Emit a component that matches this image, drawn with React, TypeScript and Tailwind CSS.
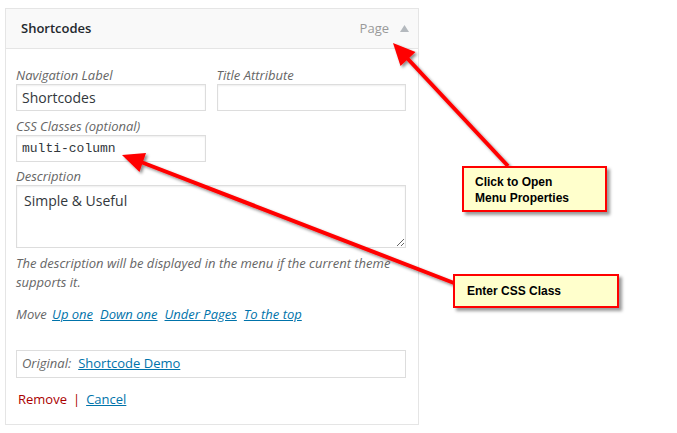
import React from 'react';

const labelCls = "block text-[13px] leading-[18px] italic text-[#666]";
const inputCls =
  "block w-full h-[27px] border border-[#ddd] bg-white px-[5px] text-[14px] text-[#32373c] shadow-[inset_0_1px_2px_rgba(0,0,0,0.07)] outline-none";

const MenuItemPanel: React.FC = () => {
  return (
    <div className="ml-[5px] mt-[8px] w-[414px] border border-[#e5e5e5] bg-white font-['Open_Sans',sans-serif]">
      {/* header */}
      <div className="flex h-[40px] items-center justify-between border-b border-[#e5e5e5] bg-[#f9f9f9] pl-[15px] pr-[9px]">
        <span className="text-[13px] font-semibold text-[#23282d]">Shortcodes</span>
        <span className="flex items-center gap-[11px] text-[13px] text-[#999]">
          Page
          <svg width="9" height="7" viewBox="0 0 9 7">
            <path d="M4.5 0 L9 7 L0 7 Z" fill="#b4b9be" />
          </svg>
        </span>
      </div>

      {/* body */}
      <div className="pl-[10px] pr-[12px] pt-[17px] pb-[15px]">
        <div className="flex gap-[11px]">
          <div className="w-[190px]">
            <label className={labelCls}>Navigation Label</label>
            <input className={inputCls} defaultValue="Shortcodes" />
          </div>
          <div className="w-[190px]">
            <label className={labelCls}>Title Attribute</label>
            <input className={inputCls} defaultValue="" />
          </div>
        </div>

        <div className="mt-[6px] w-[190px]">
          <label className={labelCls}>CSS Classes (optional)</label>
          <input
            className={inputCls + " font-['Liberation_Mono',monospace] !text-[13px]"}
            defaultValue="multi-column"
          />
        </div>

        <div className="mt-[5px] w-[390px]">
          <label className={labelCls}>Description</label>
          <textarea
            className="block h-[63px] w-full resize-y border border-[#ddd] bg-white px-[7px] pt-[4px] text-[14px] text-[#32373c] outline-none shadow-[inset_0_1px_2px_rgba(0,0,0,0.07)]"
            defaultValue="Simple & Useful"
          />
        </div>

        <p className="mt-[6px] w-[390px] text-[13px] leading-[19px] italic text-[#666]">
          The description will be displayed in the menu if the current theme supports it.
        </p>

        <p className="mt-[13px] text-[13px] leading-[19px] italic text-[#666]">
          Move{' '}
          <a className="ml-[2px] text-[#0073aa] underline">Up one</a>
          <a className="ml-[7px] text-[#0073aa] underline">Down one</a>
          <a className="ml-[7px] text-[#0073aa] underline">Under Pages</a>
          <a className="ml-[7px] text-[#0073aa] underline">To the top</a>
        </p>

        <div className="mt-[26px] flex h-[28px] w-[390px] items-center border border-[#ddd] px-[5px] text-[13px]">
          <span className="italic text-[#666]">Original:</span>
          <a className="ml-[7px] text-[#0073aa] underline">Shortcode Demo</a>
        </div>

        <div className="mt-[12px] flex items-center pl-[2px] text-[13px] leading-[19px]">
          <a className="text-[#a00]">Remove</a>
          <span className="mx-[6px] text-[#a00]">|</span>
          <a className="text-[#0073aa] underline">Cancel</a>
        </div>
      </div>
    </div>
  );
};

const Arrows: React.FC = () => (
  <svg className="pointer-events-none absolute left-0 top-0" width="677" height="433">
    <defs>
      <filter id="shadow" x="-20%" y="-20%" width="140%" height="140%">
        <feDropShadow dx="2" dy="2" stdDeviation="1.5" floodColor="#000" floodOpacity="0.45" />
      </filter>
    </defs>
    <g filter="url(#shadow)">
      <line x1="508" y1="166" x2="407" y2="58" stroke="#ff0000" strokeWidth="4" />
      <polygon points="393,43 415.5,52 400.5,66" fill="#ff0000" />
      <line x1="454" y1="283" x2="141" y2="162" stroke="#ff0000" strokeWidth="4" />
      <polygon points="122,155 146,153 139.5,172" fill="#ff0000" />
    </g>
  </svg>
);

const Callout: React.FC<{ className: string; children: React.ReactNode }> = ({ className, children }) => (
  <div
    className={
      "absolute border-2 border-[#ff0000] bg-[#ffffcc] font-['Liberation_Sans',Arial,sans-serif] text-[12px] font-bold leading-[16px] text-black shadow-[3px_3px_3px_rgba(0,0,0,0.4)] " +
      className
    }
  >
    {children}
  </div>
);

const App: React.FC = () => {
  return (
    <div className="relative h-[433px] w-[677px] overflow-hidden bg-white">
      <MenuItemPanel />
      <Arrows />
      <Callout className="left-[462px] top-[166px] h-[46px] w-[145px] pl-[11px] pt-[6px]">
        Click to Open
        <br />
        Menu Properties
      </Callout>
      <Callout className="left-[453px] top-[274px] h-[34px] w-[166px] pl-[12px] pt-[7px]">
        Enter CSS Class
      </Callout>
    </div>
  );
};

export default App;
